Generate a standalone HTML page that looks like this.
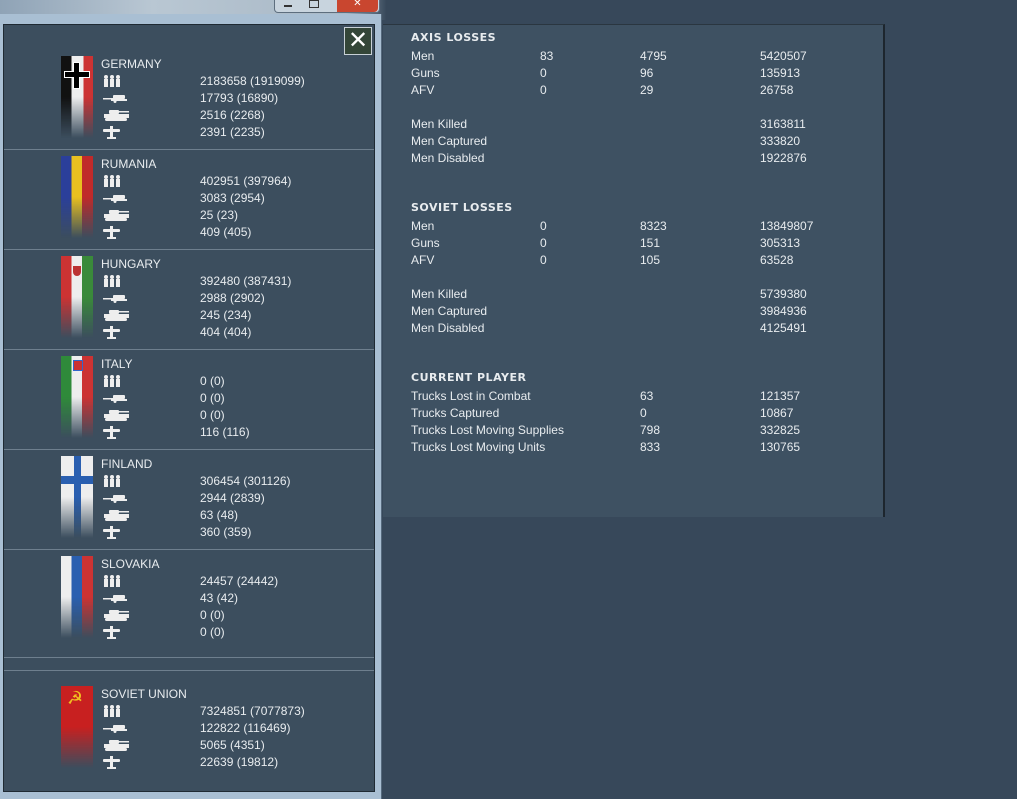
<!DOCTYPE html><html><head><style>
body{margin:0;width:1017px;height:799px;background:#37485a;position:relative;overflow:hidden;font-family:"Liberation Sans",Arial,sans-serif;font-size:12px;color:#e8ecef}
.a{position:absolute;white-space:nowrap}
.top{position:absolute;left:0;top:0;width:1017px;height:20px;background:linear-gradient(90deg,#8fa3b6,#b9c7d3 15%,#a8b8c6 34%,#37485a 38%)}
.win{position:absolute;left:0;top:14px;width:381px;height:785px;background:#a9bfd3;border-right:1px solid #55697c}
.inner{position:absolute;left:3px;top:24px;width:370px;height:766px;background:#3c4e5e;border:1px solid #1f2a33}
.sec{position:absolute;left:0;width:370px;border-bottom:1px solid #6e7f8e}
.rp{position:absolute;left:383px;top:24px;width:500px;height:492px;background:#3e5162;border-right:2px solid #1d262e;border-top:1px solid #2a3640}
.h{font-weight:bold;font-size:11px;letter-spacing:.5px;font-family:"DejaVu Sans",sans-serif}
</style></head><body>
<div class="top"></div>
<div class="a" style="left:274px;top:0;width:104px;height:12px;background:#c8d4de;border:1px solid #5d6e7e;border-top:0;border-radius:0 0 4px 4px"></div>
<div class="a" style="left:337px;top:0;width:41px;height:12px;background:#c9462f;border-radius:0 0 4px 0;color:#fff;font-size:10px;text-align:center;line-height:8px">✕</div>
<div class="a" style="left:284px;top:5px;width:8px;height:2px;background:#333"></div>
<div class="a" style="left:309px;top:0;width:8px;height:6px;border:1px solid #333"></div>
<div class="win"></div>
<div class="inner">
<div class="sec" style="top:0;height:124px"></div>
<div class="sec" style="top:125px;height:99px"></div>
<div class="sec" style="top:225px;height:99px"></div>
<div class="sec" style="top:325px;height:99px"></div>
<div class="sec" style="top:425px;height:99px"></div>
<div class="sec" style="top:525px;height:107px"></div>
<div class="sec" style="top:633px;height:12px"></div>
<div class="a" style="left:340px;top:2px;width:26px;height:26px;border:1px solid #c8d0d6;background:#344638;color:#fff;font-size:24px;line-height:26px;text-align:center">✕</div>
</div>
<div id="L"></div>
<div class="rp"></div>
<div id="R"></div>
<script>
var fl=[
["GERMANY","linear-gradient(90deg,#111 33%,#eee 33% 70%,#c33 70%)",["2183658 (1919099)","17793 (16890)","2516 (2268)","2391 (2235)"],56,'<div class="a" style="left:12px;top:6px;width:5px;height:25px;background:#000;border:1px solid #fff"></div><div class="a" style="left:3px;top:15px;width:24px;height:5px;background:#000;border:1px solid #fff"></div><div class="a" style="left:13px;top:7px;width:5px;height:25px;background:#000"></div>'],
["RUMANIA","linear-gradient(90deg,#2b3f9a 33%,#e8c020 33% 66%,#c02a2a 66%)",["402951 (397964)","3083 (2954)","25 (23)","409 (405)"],156,''],
["HUNGARY","linear-gradient(90deg,#c33 33%,#eee 33% 66%,#3a8a3a 66%)",["392480 (387431)","2988 (2902)","245 (234)","404 (404)"],256,'<div class="a" style="left:12px;top:10px;width:8px;height:10px;background:#b33;border-radius:0 0 4px 4px"></div>'],
["ITALY","linear-gradient(90deg,#2f8a3a 33%,#eee 33% 66%,#c33 66%)",["0 (0)","0 (0)","0 (0)","116 (116)"],356,'<div class="a" style="left:12px;top:4px;width:8px;height:9px;background:#c33;border:1px solid #36c"></div>'],
["FINLAND","linear-gradient(90deg,#eee 40%,#2a5fb0 40% 62%,#eee 62%)",["306454 (301126)","2944 (2839)","63 (48)","360 (359)"],456,'<div class="a" style="left:0;top:20px;width:32px;height:8px;background:#2a5fb0"></div>'],
["SLOVAKIA","linear-gradient(90deg,#eee 33%,#2a5fb0 33% 66%,#c33 66%)",["24457 (24442)","43 (42)","0 (0)","0 (0)"],556,''],
["SOVIET UNION","linear-gradient(#c82020,#c82020)",["7324851 (7077873)","122822 (116469)","5065 (4351)","22639 (19812)"],686,'<div class="a" style="left:6px;top:2px;color:#f0c020;font-size:18px">☭</div>']];
var ic=['<svg width="20" height="12"><g fill="#eee"><circle cx="3" cy="2" r="2"/><circle cx="9" cy="2" r="2"/><circle cx="15" cy="2" r="2"/><rect x="1" y="4" width="4" height="8"/><rect x="7" y="4" width="4" height="8"/><rect x="13" y="4" width="4" height="8"/></g></svg>',
'<svg width="28" height="12"><g fill="#eee"><rect x="0" y="6" width="12" height="1.5"/><rect x="10" y="3" width="12" height="4" rx="1"/><rect x="8" y="7" width="16" height="2"/><circle cx="12" cy="9.5" r="1.5"/></g></svg>',
'<svg width="28" height="12"><g fill="#eee"><rect x="6" y="1" width="10" height="4" rx="1"/><rect x="14" y="2" width="12" height="1.5"/><rect x="1" y="5" width="25" height="4"/><rect x="2" y="9" width="22" height="3" rx="1.5"/></g></svg>',
'<svg width="28" height="13"><g fill="#eee"><rect x="7" y="0" width="3" height="13"/><rect x="0" y="3" width="17" height="3" rx="1"/><rect x="4" y="11" width="9" height="2"/></g></svg>'];
var h='';
fl.forEach(function(f){var y=f[3];
h+='<div class="a" style="left:61px;top:'+y+'px;width:32px;height:82px;background:'+f[1]+';-webkit-mask-image:linear-gradient(#000 50%,transparent);mask-image:linear-gradient(#000 50%,transparent)">'+f[4]+'</div>';
h+='<div class="a" style="left:101px;top:'+(y+1)+'px">'+f[0]+'</div>';
for(var i=0;i<4;i++){h+='<div class="a" style="left:103px;top:'+(y+19+i*17)+'px">'+ic[i]+'</div><div class="a" style="left:200px;top:'+(y+18+i*17)+'px">'+f[2][i]+'</div>';}
});
document.getElementById('L').innerHTML=h;
var R=[["h","AXIS LOSSES",31],["Men",49,"83","4795","5420507"],["Guns",66,"0","96","135913"],["AFV",83,"0","29","26758"],["Men Killed",117,"","","3163811"],["Men Captured",134,"","","333820"],["Men Disabled",151,"","","1922876"],
["h","SOVIET LOSSES",201],["Men",219,"0","8323","13849807"],["Guns",236,"0","151","305313"],["AFV",253,"0","105","63528"],["Men Killed",287,"","","5739380"],["Men Captured",304,"","","3984936"],["Men Disabled",321,"","","4125491"],
["h","CURRENT PLAYER",371],["Trucks Lost in Combat",389,"63","121357",""],["Trucks Captured",406,"0","10867",""],["Trucks Lost Moving Supplies",423,"798","332825",""],["Trucks Lost Moving Units",440,"833","130765",""]];
h='';R.forEach(function(r){
if(r[0]=="h"){h+='<div class="a h" style="left:411px;top:'+r[2]+'px">'+r[1]+'</div>';return;}
var y=r[1];h+='<div class="a" style="left:411px;top:'+y+'px">'+r[0]+'</div>';
if(r[0].indexOf("Trucks")==0){h+='<div class="a" style="left:640px;top:'+y+'px">'+r[2]+'</div><div class="a" style="left:760px;top:'+y+'px">'+r[3]+'</div>';}
else{h+='<div class="a" style="left:540px;top:'+y+'px">'+r[2]+'</div><div class="a" style="left:640px;top:'+y+'px">'+r[3]+'</div><div class="a" style="left:760px;top:'+y+'px">'+r[4]+'</div>';}
});
document.getElementById('R').innerHTML=h;
</script>
</body></html>
